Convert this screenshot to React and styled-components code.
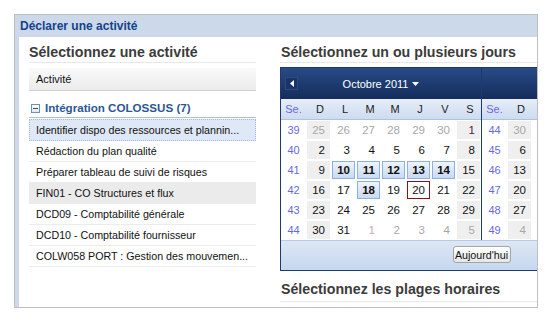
import styled, { createGlobalStyle } from "styled-components";

const GlobalStyle = createGlobalStyle`
  body {
    margin: 0;
    background: #fff;
    font-family: "Liberation Sans", Arial, sans-serif;
  }
`;

const Page = styled.div`
  padding: 14px 0 0 14px;
`;

const Panel = styled.div`
  width: 522px;
  height: 292px;
  border: 1px solid #bfbfbf;
  display: flex;
  flex-direction: column;
`;

const PanelHeader = styled.div`
  height: 22px;
  line-height: 22px;
  padding-left: 5px;
  background: #cbd9ea;
  color: #15428b;
  font-size: 12px;
  font-weight: bold;
`;

const PanelBody = styled.div`
  flex: 1;
  display: flex;
  border-left: 4px solid #cbd9ea;
  min-height: 0;
`;

const LeftCol = styled.div`
  width: 227px;
  margin-left: 10px;
`;

const RightCol = styled.div`
  flex: 1;
  min-width: 0;
  margin-left: 24px;
  overflow: hidden;
`;

const Heading = styled.h2`
  margin: ${(p) => (p.$top ? p.$top : "6px")} 0 0 0;
  padding: 0 0 ${(p) => (p.$bottom ? p.$bottom : "1px")} ${(p) => (p.$indent ? "1px" : "0")};
  line-height: 18px;
  font-size: 14.2px;
  font-weight: bold;
  color: #3b3b3b;
  border-bottom: 1px solid #e8e8e8;
  white-space: nowrap;
`;

const GridHeader = styled.div`
  margin-top: 5px;
  height: 22px;
  line-height: 22px;
  padding-left: 7px;
  font-size: 11px;
  color: #111;
  background: linear-gradient(#fafafa, #ebebeb);
  border-bottom: 1px solid #d0d0d0;
`;

const Group = styled.div`
  display: flex;
  align-items: center;
  gap: 5px;
  padding: 10px 0 2px 2px;
  line-height: 14px;
  font-size: 11.6px;
  font-weight: bold;
  color: #2b5796;
  border-bottom: 1px solid #a9c0e3;
  margin-bottom: 1px;
`;

const Toggle = styled.span`
  position: relative;
  width: 9px;
  height: 9px;
  box-sizing: border-box;
  border: 1px solid #6f8fbf;
  background: linear-gradient(#ffffff, #dde6f3);
  &::after {
    content: "";
    position: absolute;
    left: 1px;
    right: 1px;
    top: 3px;
    height: 1px;
    background: #2b4f88;
  }
`;

const Row = styled.div`
  box-sizing: border-box;
  height: ${(p) => (p.$selected ? "22px" : "21px")};
  line-height: 20px;
  padding-left: ${(p) => (p.$selected ? "6px" : "7px")};
  font-size: 10.7px;
  color: #111;
  white-space: nowrap;
  overflow: hidden;
  background: ${(p) => (p.$selected ? "#dfe8f6" : p.$hover ? "#ebebeb" : "#fff")};
  border: ${(p) => (p.$selected ? "1px dotted #a3bae9" : "none")};
  border-bottom: ${(p) => (p.$selected ? "1px dotted #a3bae9" : "1px solid #ececec")};
`;

const Calendar = styled.div`
  margin-top: 4px;
  width: 403px;
  border: 1px solid #1c3a6e;
  box-sizing: border-box;
`;

const Months = styled.div`
  display: flex;
`;

const Month = styled.div`
  width: 200px;
  flex: none;
  border-right: ${(p) => (p.$divider ? "1px solid #1c3a6e" : "none")};
`;

const NavBar = styled.div`
  height: 31px;
  display: flex;
  align-items: center;
  padding: 0 4px;
  background: linear-gradient(#284a86, #142d5b);
`;

const NavButton = styled.div`
  width: 13px;
  height: 13px;
  box-sizing: border-box;
  display: flex;
  align-items: center;
  justify-content: center;
  background: ${(p) => (p.$hidden ? "transparent" : "#1a3467")};
  border: 1px solid ${(p) => (p.$hidden ? "transparent" : "#2a4a82")};
`;

const NavTitle = styled.div`
  flex: 1;
  display: flex;
  align-items: center;
  justify-content: center;
  gap: 4px;
  color: #fff;
  font-size: 11px;
`;

const DayNames = styled.div`
  display: grid;
  grid-template-columns: repeat(8, 25px);
  height: 21px;
  background: linear-gradient(#e5edf8, #cedcf0);
  border-bottom: 1px solid #aac2e3;
  box-sizing: border-box;
`;

const DayName = styled.div`
  line-height: 20px;
  font-size: 11px;
  text-align: center;
  padding-left: ${(p) => (p.$week ? "0" : "3px")};
  color: ${(p) => (p.$week ? "#6868e6" : "#222")};
`;

const Days = styled.div`
  display: grid;
  grid-template-columns: repeat(8, 25px);
  grid-auto-rows: 20px;
  background: #fff;
`;

const WeekNum = styled.div`
  grid-column: 1;
  line-height: 20px;
  text-align: center;
  font-size: 11px;
  color: #6868e6;
`;

const dayColors = {
  other: "#a8a8a8",
  first: "#5e1445",
  otherFirst: "#c6a9bb",
};

const Day = styled.div`
  margin: 1px;
  height: 18px;
  line-height: 16px;
  box-sizing: border-box;
  padding-right: 4px;
  text-align: right;
  font-size: 11.5px;
  border: 1px solid
    ${(p) => (p.$kind === "sel" ? "#8db0e0" : p.$kind === "today" ? "#8a1212" : "transparent")};
  background: ${(p) =>
    p.$kind === "sel"
      ? "linear-gradient(#eef4fc, #c9daf2)"
      : p.$kind === "today"
      ? "#fff"
      : p.$weekend
      ? "#efefef"
      : "#fff"};
  color: ${(p) => dayColors[p.$kind] || "#111"};
  font-weight: ${(p) => (p.$kind === "sel" ? "bold" : "normal")};
`;

const Footer = styled.div`
  height: 30px;
  display: flex;
  justify-content: center;
  padding-top: 5px;
  box-sizing: border-box;
  background: linear-gradient(#dde7f5, #c6d7ee);
  border-top: 1px solid #b7cbe7;
`;

const TodayButton = styled.button`
  height: 17px;
  width: 58px;
  padding: 0;
  font-family: "Liberation Sans", Arial, sans-serif;
  font-size: 10.7px;
  color: #111;
  background: linear-gradient(#ffffff, #e6e6e6);
  border: 1px solid #a4a4a4;
  border-radius: 3px;
`;

const rows = [
  "Identifier dispo des ressources et plannin...",
  "Rédaction du plan qualité",
  "Préparer tableau de suivi de risques",
  "FIN01 - CO Structures et flux",
  "DCD09 - Comptabilité générale",
  "DCD10 - Comptabilité fournisseur",
  "COLW058 PORT : Gestion des mouvemen...",
];

const o = (n) => ({ n, kind: "other" });
const d = (n, kind) => ({ n, kind });

const october = {
  title: "Octobre 2011",
  weeks: [
    [39, [o(25), o(26), o(27), o(28), o(29), o(30), d(1, "first")]],
    [40, [2, 3, 4, 5, 6, 7, 8].map((n) => d(n))],
    [41, [d(9), d(10, "sel"), d(11, "sel"), d(12, "sel"), d(13, "sel"), d(14, "sel"), d(15)]],
    [42, [d(16), d(17), d(18, "sel"), d(19), d(20, "today"), d(21), d(22)]],
    [43, [23, 24, 25, 26, 27, 28, 29].map((n) => d(n))],
    [44, [d(30), d(31), d(1, "otherFirst"), o(2), o(3), o(4), o(5)]],
  ],
};

// only the part of november that shows before the panel edge
const november = {
  weeks: [
    [44, [o(30)]],
    [45, [d(6)]],
    [46, [d(13)]],
    [47, [d(20)]],
    [48, [d(27)]],
    [49, [o(4)]],
  ],
};

const names = ["D", "L", "M", "M", "J", "V", "S"];

function CalMonth({ month, prev, divider }) {
  const cols = month.weeks[0][1].length;
  return (
    <Month $divider={divider}>
      <NavBar>
        <NavButton $hidden={!prev}>
          {prev && (
            <svg width="4" height="7" viewBox="0 0 4 7">
              <path d="M4 0 L0 3.5 L4 7 Z" fill="#fff" />
            </svg>
          )}
        </NavButton>
        {month.title && (
          <>
            <NavTitle>
              {month.title}
              <svg width="7" height="4" viewBox="0 0 7 4">
                <path d="M0 0 L7 0 L3.5 4 Z" fill="#fff" />
              </svg>
            </NavTitle>
            <NavButton $hidden />
          </>
        )}
      </NavBar>
      <DayNames>
        <DayName $week>Se.</DayName>
        {names.slice(0, cols).map((n, i) => (
          <DayName key={i}>{n}</DayName>
        ))}
      </DayNames>
      <Days>
        {month.weeks.map(([wk, days]) => [
          <WeekNum key={"w" + wk}>{wk}</WeekNum>,
          ...days.map((day, i) => (
            <Day key={wk + "-" + i} $kind={day.kind} $weekend={i === 0 || i === 6}>
              {day.n}
            </Day>
          )),
        ])}
      </Days>
    </Month>
  );
}

export default function App() {
  return (
    <>
      <GlobalStyle />
      <Page>
        <Panel>
          <PanelHeader>Déclarer une activité</PanelHeader>
          <PanelBody>
            <LeftCol>
              <Heading>Sélectionnez une activité</Heading>
              <GridHeader>Activité</GridHeader>
              <Group>
                <Toggle />
                Intégration COLOSSUS (7)
              </Group>
              {rows.map((r, i) => (
                <Row key={i} $selected={i === 0} $hover={i === 3}>
                  {r}
                </Row>
              ))}
            </LeftCol>
            <RightCol>
              <Heading $indent>Sélectionnez un ou plusieurs jours</Heading>
              <Calendar>
                <Months>
                  <CalMonth month={october} prev divider />
                  <CalMonth month={november} />
                </Months>
                <Footer>
                  <TodayButton>Aujourd'hui</TodayButton>
                </Footer>
              </Calendar>
              <Heading $indent $top="9px" $bottom="3px">
                Sélectionnez les plages horaires
              </Heading>
            </RightCol>
          </PanelBody>
        </Panel>
      </Page>
    </>
  );
}
